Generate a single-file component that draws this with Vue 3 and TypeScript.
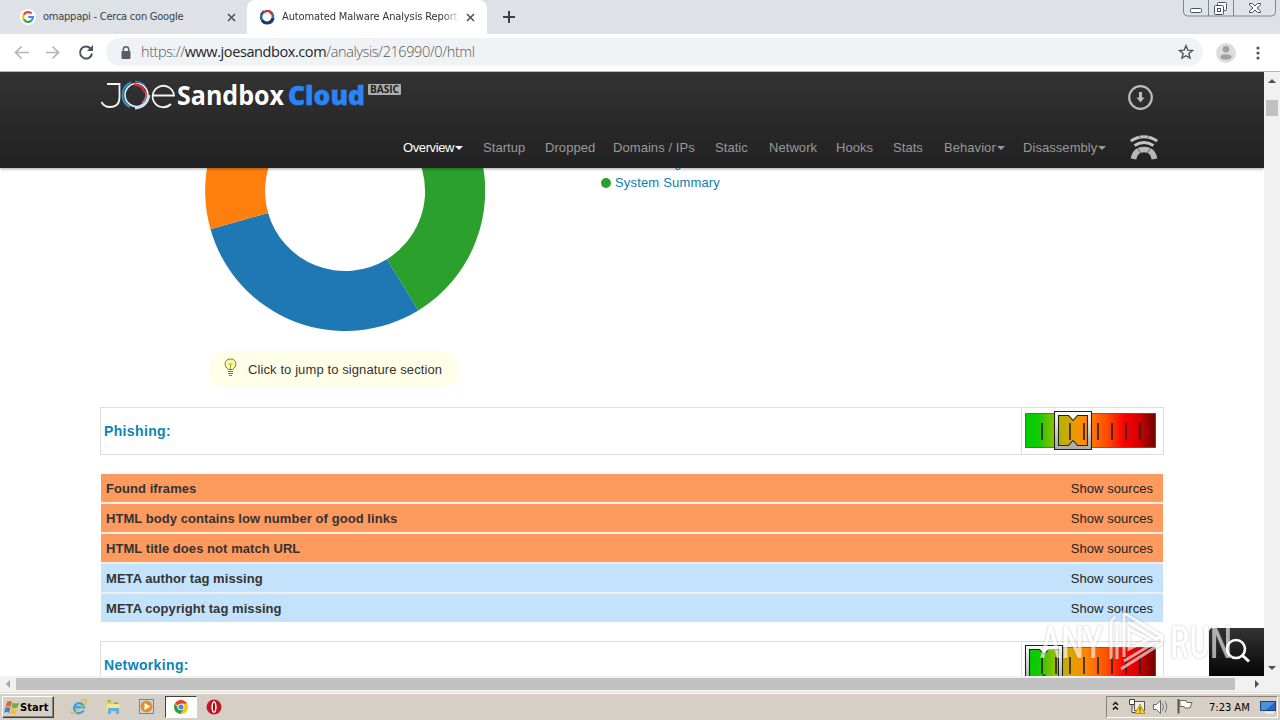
<script setup lang="ts">
interface NavItem { label: string; active?: boolean; menu?: boolean }
interface Finding { title: string; level: 'warn' | 'info' }

const navItems: NavItem[] = [
  { label: 'Overview', active: true, menu: true },
  { label: 'Startup' },
  { label: 'Dropped' },
  { label: 'Domains / IPs' },
  { label: 'Static' },
  { label: 'Network' },
  { label: 'Hooks' },
  { label: 'Stats' },
  { label: 'Behavior', menu: true },
  { label: 'Disassembly', menu: true },
]

const findings: Finding[] = [
  { title: 'Found iframes', level: 'warn' },
  { title: 'HTML body contains low number of good links', level: 'warn' },
  { title: 'HTML title does not match URL', level: 'warn' },
  { title: 'META author tag missing', level: 'info' },
  { title: 'META copyright tag missing', level: 'info' },
]

const ticks = [17, 31, 45, 59, 73, 87, 101, 115]
</script>

<template>
  <div class="screen">
    <div class="tabstrip">
      <div class="tab">
        <svg class="favicon" width="16" height="16" viewBox="0 0 16 16">
          <circle cx="8" cy="8" r="8" fill="#fff" />
          <g fill="none" stroke-width="2.2">
            <path d="M11.6 4.6A4.9 4.9 0 0 0 3.7 5.7" stroke="#ea4335" />
            <path d="M3.7 5.7a4.9 4.9 0 0 0 0 4.6" stroke="#fbbc05" />
            <path d="M3.7 10.3a4.9 4.9 0 0 0 7.6 1.3" stroke="#34a853" />
            <path d="M11.3 11.6A4.8 4.8 0 0 0 12.9 8H8.2" stroke="#4285f4" />
          </g>
        </svg>
        <span class="tab-title first">omappapi - Cerca con Google</span>
        <svg class="close" width="9" height="9" viewBox="0 0 9 9"><path d="M1 1l7 7M8 1l-7 7" stroke="#4e5256" stroke-width="1.6" /></svg>
      </div>
      <div class="tab current">
        <svg class="favicon" width="16" height="16" viewBox="0 0 16 16">
          <g fill="none" stroke-width="2.6">
            <path d="M5 3A6 6 0 0 0 3.500 12" stroke="#2a6c9c" />
            <path d="M3.2 11.5A6 6 0 0 0 14 8.5" stroke="#173a5c" stroke-width="3" />
            <path d="M14 8.5A6 6 0 0 0 11.5 3" stroke="#3f6f98" />
            <path d="M5 3.500l1.500-1.300h4L12.800 5" stroke="#cf2f35" stroke-width="2.200" />
            <path d="M1.500 5.500L4.500 1.500M14.500 11l-3 3.500" stroke="#234c73" stroke-width="1.200" />
          </g>
        </svg>
        <span class="tab-title second">Automated Malware Analysis Report</span>
        <svg class="close" width="9" height="9" viewBox="0 0 9 9"><path d="M1 1l7 7M8 1l-7 7" stroke="#4e5256" stroke-width="1.6" /></svg>
      </div>
      <svg class="plus" width="12" height="12" viewBox="0 0 12 12"><path d="M6 0v12M0 6h12" stroke="#3c4043" stroke-width="2" /></svg>
      <svg class="winbtns" width="94" height="18" viewBox="0 0 94 18">
        <path d="M.5 0v12q0 4 4 4h84q4 0 4-4V0" fill="#e0e3e9" stroke="#80858f" />
        <path d="M25.500 0v16M50.500 0v16" stroke="#80858f" />
        <g fill="#fff" stroke="#4b5262">
          <rect x="7.500" y="8.500" width="11" height="4" rx="1" />
          <rect x="34.500" y="2.500" width="9" height="8" rx="1" />
          <rect x="31.500" y="5.500" width="9" height="9" rx="1" />
          <rect x="34.500" y="8.500" width="3" height="3" />
          <path d="M66.500 3.500h3l2.500 2.500 2.500-2.500h3v1.500l-3.500 3 3.500 3v1.500h-3L72 10l-2.500 2.500h-3V11l3.500-3-3.500-3z" />
        </g>
      </svg>
    </div>

    <div class="toolbar">
      <svg class="navicons" width="80" height="16" viewBox="0 0 80 16" fill="none">
        <path d="M15 7.500H2M7.500 1.500l-6 6 6 6" stroke="#b4b5b7" stroke-width="1.700" />
        <path d="M32 7.500h12M38.500 1.500l6 6-6 6" stroke="#b4b5b7" stroke-width="1.700" />
        <path d="M76.500 3.500A6 6 0 1 0 78 8.500" stroke="#505356" stroke-width="2" />
        <path d="M79 0v6h-6z" fill="#505356" />
      </svg>
      <div class="omnibox">
        <svg width="10" height="13" viewBox="0 0 10 13"><path d="M2.300 6V3.500a2.700 2.700 0 0 1 5.400 0V6" fill="none" stroke="#5a5d61" stroke-width="1.500" /><rect x=".5" y="5" width="9" height="8" rx="1" fill="#5a5d61" /></svg>
        <span class="url">https://<b>www.joesandbox.com</b>/analysis/216990/0/html</span>
        <svg class="star" width="16" height="16" viewBox="0 0 16 16"><path d="M8 1.800l1.800 4.300 4.700.4-3.600 3 1.100 4.600L8 11.700l-4 2.400 1.100-4.600-3.600-3 4.700-.4z" fill="none" stroke="#505356" stroke-width="1.400" /></svg>
      </div>
      <svg class="avatar" width="20" height="20" viewBox="0 0 20 20"><circle cx="10" cy="10" r="10" fill="#dcdcdc" /><circle cx="10" cy="6.300" r="3.300" fill="#a0a0a0" /><ellipse cx="10" cy="14" rx="5.700" ry="2.800" fill="#a0a0a0" /></svg>
      <svg class="dots" width="4" height="14" viewBox="0 0 4 14" fill="#505356"><circle cx="2" cy="2" r="1.600" /><circle cx="2" cy="7" r="1.600" /><circle cx="2" cy="12" r="1.600" /></svg>
    </div>

    <div class="view">
      <div class="page">
        <header class="site-header">
          <div class="brand-row">
            <svg class="logo" width="304" height="32" viewBox="100 78 304 32">
              <path d="M107 84h12.500v13q0 10-9.500 10-6 0-8.500-5" fill="none" stroke="#f4f4f4" stroke-width="1.800" />
              <g fill="none">
                <circle cx="136.500" cy="95" r="11.500" stroke="#e6eef5" stroke-width="1.600" />
                <path d="M131 82.500a13.500 13.500 0 0 0-1 24.500" stroke="#2f8dc6" stroke-width="2.200" />
                <path d="M135 81.500a13.500 13.500 0 0 1 10 4" stroke="#3a93c6" stroke-width="1.200" />
                <path d="M134 84.500q8 0 11 8" stroke="#d42a34" stroke-width="2.400" />
                <path d="M135 108q12-1 14-13" stroke="#c4e6fb" stroke-width="2.800" />
                <path d="M146 91q1 8-4 12" stroke="#e26d74" stroke-width="1.500" />
                <path d="M152.500 95.500h21.500a10.700 10.700 0 1 0-3 8.500" stroke="#f4f4f4" stroke-width="1.800" />
              </g>
              <text class="word" x="177" y="104.500" textLength="107" lengthAdjust="spacingAndGlyphs" fill="#fff">Sandbox</text>
              <text class="word cloud" x="288" y="104.500" textLength="77" lengthAdjust="spacingAndGlyphs" fill="#2b84f5" stroke="#2b84f5">Cloud</text>
              <rect x="368" y="84" width="33" height="11" rx="1" fill="#adadad" />
              <text class="basic" x="370" y="93" textLength="29" lengthAdjust="spacingAndGlyphs" fill="#202020">BASIC</text>
            </svg>
            <svg class="download" width="26" height="26" viewBox="0 0 26 26"><circle cx="12.500" cy="12.500" r="11.300" fill="none" stroke="#bcbcbc" stroke-width="2.200" /><path d="M11 7h3v5.500h2.500l-4 5-4-5H11z" fill="#bcbcbc" /></svg>
          </div>
          <nav class="nav">
            <a v-for="item in navItems" :key="item.label" :class="{ active: item.active }">{{ item.label }}<i v-if="item.menu" class="caret"></i></a>
            <svg class="signal" width="28" height="26" viewBox="0 0 28 26" fill="none">
              <path d="M.8 6Q14-2.500 27.200 6" stroke="#c4c4c4" stroke-width="2.800" />
              <path d="M4.500 10.500q9.500-6 19 0" stroke="#c4c4c4" stroke-width="2.800" />
              <path d="M3.500 24Q5 14.500 14 14.500T24.500 24" stroke="#b8b8b8" stroke-width="5.600" />
              <path d="M7 12.500l4 6M21 12.500l-4 6M9 0l1 3M19 0l-1 3" stroke="#2b2b2b" stroke-width=".6" />
            </svg>
          </nav>
        </header>

        <main class="report">
          <section class="summary">
            <svg class="donut" width="280" height="163" viewBox="205 168 280 163">
              <path d="M418.300 310.400A140 140 0 0 0 345 51V111A80 80 0 0 1 386.900 259.200z" fill="#2ca02c" />
              <path d="M418.300 310.400A140 140 0 0 1 210.500 229.300L268.100 212.900A80 80 0 0 0 386.900 259.200z" fill="#1f77b4" />
              <path d="M210.500 229.300A140 140 0 0 1 345 51V111A80 80 0 0 0 268.100 212.900z" fill="#ff7f0e" />
            </svg>
            <ul class="legend">
              <li><i class="dot"></i><span>Networking</span></li>
              <li><i class="dot"></i><span>System Summary</span></li>
            </ul>
          </section>

          <div class="hint">
            <svg width="13" height="19" viewBox="0 0 13 19"><path d="M4.300 11.500Q1 9 1 5.700 1.500 1 6.500 1T12 5.700Q12 9 8.700 11.500z" fill="#fbfa9b" stroke="#77775a" /><path d="M6.500 11V7L4.500 5M6.500 7l2-2" stroke="#a2a03c" fill="none" /><path d="M4 13.500h5M4 15.500h5M5 17.500h3" stroke="#777" /></svg>
            <span>Click to jump to signature section</span>
          </div>

          <section v-for="name in ['Phishing:', 'Networking:']" :key="name" class="block">
            <div class="head">
              <h3>{{ name }}</h3>
              <div class="meter">
                <svg width="140" height="48" viewBox="0 0 140 48">
                  <defs>
                    <linearGradient id="heat"><stop offset="0" stop-color="#0c0" /><stop offset=".1" stop-color="#14ca00" /><stop offset=".22" stop-color="#90c000" /><stop offset=".34" stop-color="#dba400" /><stop offset=".45" stop-color="#ff8a00" /><stop offset=".62" stop-color="#ff5000" /><stop offset=".76" stop-color="#fa0000" /><stop offset=".86" stop-color="#dc0000" /><stop offset="1" stop-color="#700000" /></linearGradient>
                    <linearGradient id="silver" x1="0" x2="0" y1="0" y2="1"><stop offset="0" stop-color="#fff" /><stop offset="1" stop-color="#a9a9a9" /></linearGradient>
                  </defs>
                  <rect x="3.500" y="5.500" width="130" height="34" fill="url(#heat)" stroke="#333" stroke-opacity=".65" />
                  <path v-for="x in ticks" :key="x" :d="`M${x + 3} 15v17`" stroke="#222" stroke-opacity=".8" stroke-width="2" />
                  <g :transform="name === 'Phishing:' ? 'translate(32 3)' : 'translate(3 3)'">
                    <path fill-rule="evenodd" d="M.5.5h37v38H.5zM4.500 4.500v30h10l4.500-5 4.500 5h10v-30h-10L19 9.500 14.500 4.500z" fill="url(#silver)" stroke="#222" stroke-width="1.100" />
                  </g>
                </svg>
              </div>
            </div>
            <ul v-if="name === 'Phishing:'" class="findings">
              <li v-for="f in findings" :key="f.title" :class="f.level"><strong>{{ f.title }}</strong><span>Show sources</span></li>
            </ul>
          </section>
        </main>

        <div class="search"><svg width="26" height="26" viewBox="0 0 26 26" fill="none" stroke="#fff"><circle cx="11" cy="11" r="9" stroke-width="2.600" /><path d="M17.500 17.500l6.500 6" stroke-width="3" /></svg></div>
        <svg class="watermark" width="200" height="64" viewBox="1036 608 200 64">
          <text x="1040" y="658" textLength="63" lengthAdjust="spacingAndGlyphs">ANY</text>
          <text x="1170" y="658" textLength="62" lengthAdjust="spacingAndGlyphs">RUN</text>
          <g class="mark">
            <path d="M1111 659V624q0-5 5-7M1117 625v34" />
            <path d="M1124 657V613l38 23-6 3-28-17M1129 629v20l20-10zM1121 669l41-26v-6M1124 661l30-18" />
          </g>
        </svg>
      </div>
      <div class="vscroll"><i class="tri up"></i><i class="thumb"></i><i class="tri down"></i></div>
    </div>

    <div class="hscroll"><i class="tri left"></i><i class="hthumb"></i><i class="tri right"></i></div>

    <footer class="taskbar">
      <div class="start">
        <svg width="16" height="15" viewBox="0 0 16 15"><path d="M3 2q3-2 5 0L6.500 7q-2.500-2-5 0z" fill="#e8622c" /><path d="M9 2.500q3 2 6 0l-1.500 5q-3 1.500-6 0z" fill="#72ae3c" /><path d="M1.300 8q2.500-2 5 0L5 13q-2.500-2-5 0z" fill="#3d84ce" /><path d="M7.300 8.500q3 2 6 0l-1.500 5q-3 1.500-6 0z" fill="#f6c12c" /></svg>
        <b>Start</b>
      </div>
      <div class="apps">
        <span class="app"><svg width="18" height="18" viewBox="0 0 18 18" fill="none"><path d="M13.500 12.500A5 5 0 1 1 14 9.300H5" stroke="#3fa3df" stroke-width="2.400" /><path d="M1.500 13.500Q-.5 17.500 6 14T16.500 3.500q1-3.500-6-.5" stroke="#e5b53b" stroke-width="1.300" /></svg></span>
        <span class="app"><svg width="18" height="18" viewBox="0 0 18 18"><path d="M2 3h5l1 2h8v9H2z" fill="#e8c95d" /><path d="M3 6h13l-1 7H2z" fill="#f7e596" /><path d="M4 16v-6h11v6h-3v-3H7v3z" fill="#5cb1df" /><path d="M4 3h3M10 5h4" stroke="#76b34f" stroke-width="1.500" /></svg></span>
        <span class="app"><svg width="18" height="18" viewBox="0 0 18 18"><rect x="1.500" y="1.500" width="14" height="14" fill="#b9dcf5" stroke="#4c91ca" /><circle cx="8.500" cy="8.500" r="6" fill="#f28b1c" /><path d="M6.500 5l5.500 3.500L6.500 12z" fill="#fff" /></svg></span>
        <span class="app pressed"><svg width="14" height="14" viewBox="0 0 14 14"><circle cx="7" cy="7" r="7" fill="#fbc116" /><path d="M7 7L1 3.500A7 7 0 0 1 13 3.500H7z" fill="#df4332" /><path d="M1 3.500A7 7 0 0 0 6.500 14L10 8.500H4z" fill="#319d4c" /><circle cx="7" cy="7" r="3.300" fill="#fff" /><circle cx="7" cy="7" r="2.500" fill="#4384e8" /></svg></span>
        <span class="app opera"><svg width="16" height="16" viewBox="0 0 16 16"><circle cx="8" cy="8" r="7.500" fill="#c01822" /><ellipse cx="8" cy="8" rx="2.600" ry="6" fill="#fff" /><ellipse cx="8" cy="8" rx="1.100" ry="4.600" fill="#9d0c15" /></svg></span>
      </div>
      <div class="tray">
        <svg width="84" height="18" viewBox="1111 698 84 18" fill="none">
          <path d="M1113 705l2.500-2.500 2.500 2.500M1113 709.500l2.500-2.500 2.500 2.500" stroke="#111" stroke-width="1.500" />
          <rect x="1134.500" y="701.500" width="10" height="9" fill="#eee" stroke="#555" /><path d="M1129.500 699.500h5v5h-5zM1132 705v7.500h3" fill="#fff" stroke="#444" /><path d="M1140 704l5 9.500h-10z" fill="#f7d416" stroke="#8c7500" stroke-width=".6" /><path d="M1140 707v3.500M1140 711.500v1" stroke="#222" />
          <path d="M1153.500 704.500h3l4-4v13l-4-4h-3z" fill="#fff" stroke="#666" /><path d="M1162.500 703.500q2 3 0 7M1165 701.500q3.500 5 0 11" stroke="#777" />
          <path d="M1178.500 699v14.500" stroke="#555" stroke-width="2" /><path d="M1180 700.500h6l1 2h5l-2 5.500h-5l-1-1.500h-4z" fill="#fff" stroke="#666" />
        </svg>
        <span class="clock">7:23 AM</span>
        <svg width="16" height="13" viewBox="0 0 16 13"><rect x=".5" y=".5" width="15" height="9" fill="#2766bd" stroke="#1b4284" /><path d="M1 1h14L6 9H1z" fill="#4d91dd" /><path d="M5 11.500h9" stroke="#eee" stroke-width="2" /></svg>
      </div>
    </footer>
  </div>
</template>

<style>
html, body { margin: 0; overflow: hidden; }
</style>

<style scoped>
* { box-sizing: border-box; }
.screen { width: 1280px; height: 720px; display: flex; flex-direction: column; overflow: hidden; background: #fff; font-family: "Liberation Sans", Arial, sans-serif; }
svg { display: block; flex: none; }
ul { list-style: none; margin: 0; padding: 0; }

.tabstrip { height: 34px; flex: none; background: #dee1e6; display: flex; align-items: flex-start; }
.tab { width: 247px; height: 34px; display: flex; align-items: center; padding-left: 20px; }
.tab.current { width: 240px; background: #fff; border-radius: 8px 8px 0 0; padding-left: 12px; }
.tab-title { font: 11px/16px "DejaVu Sans Condensed", "DejaVu Sans", sans-serif; font-stretch: condensed; color: #3c4043; white-space: nowrap; margin-left: 7px; }
.first { width: 184px; letter-spacing: -.23px; }
.second { width: 177px; overflow: hidden; color: #303336; letter-spacing: -.12px; mask-image: linear-gradient(90deg, #000 90%, transparent 101%); }
.tab .close { margin-left: 0; }
.second + .close { margin-left: 7px; }
.plus { margin: 11px 0 0 16px; }
.winbtns { margin-left: auto; margin-right: 3px; }

.toolbar { height: 38px; flex: none; background: #fff; border-bottom: 1px solid #b8b9bb; display: flex; align-items: center; }
.navicons { margin-left: 14px; }
.omnibox { width: 1097px; height: 28px; margin-left: 12px; margin-top: -1px; border-radius: 14px; background: #f0f3f5; display: flex; align-items: center; padding: 0 9px 0 15px; }
.url { font: 300 14.5px/20px "Open Sans", sans-serif; letter-spacing: -.41px; color: #54585d; margin-left: 10px; white-space: nowrap; }
.url b { font-weight: 400; color: #24262a; }
.star { margin-left: auto; }
.avatar { margin-left: 13px; }
.dots { margin-left: 20px; }

.view { height: 604px; flex: none; display: flex; }
.page { position: relative; width: 1264px; height: 604px; overflow: hidden; background: #fff; }
.site-header { position: relative; z-index: 1; height: 96px; padding: 6px 0 0 100px; background: linear-gradient(#333, #212121); box-shadow: 0 1px 3px rgba(0, 0, 0, .35); }
.brand-row { height: 56px; display: flex; }
.logo { overflow: visible; }
.download { margin: 7px 0 0 724px; }
.word { font: 700 26.5px "Open Sans", sans-serif; }
.cloud { font-weight: 800; stroke-width: .5px; }
.basic { font: 700 10px "Open Sans", sans-serif; }
.nav { margin-left: 303px; display: grid; grid-template-columns: 80px 62px 68px 102px 54px 67px 57px 51px 79px 107px 28px; align-items: start; font-size: 13px; line-height: 28px; letter-spacing: .06px; color: #999; white-space: nowrap; }
.nav .active { color: #fff; letter-spacing: -.4px; }
.signal { margin-top: 1px; }
.caret { display: inline-block; border: 4px solid transparent; border-top-color: currentColor; border-bottom: 0; margin-left: 1px; vertical-align: 2px; }

.report { padding-left: 100px; }
.summary { height: 163px; padding-left: 105px; display: flex; }
.legend { margin: -15px 0 0 116px; font-size: 13px; line-height: 20px; letter-spacing: .17px; color: #0880b5; }
.legend li { display: flex; align-items: center; gap: 4px; height: 20px; }
.dot { width: 10px; height: 10px; border-radius: 50%; background: #2ca02c; }
.hint { width: 250px; height: 37px; margin: 20px 0 0 109px; border-radius: 18px; background: #ffffe9; display: flex; align-items: center; padding-left: 15px; font-size: 13px; letter-spacing: .1px; color: #333; white-space: nowrap; }
.hint svg { margin-top: -4px; }
.hint span { margin-left: 11px; }
.block { margin-top: 19px; width: 1064px; }
.head { display: flex; height: 48px; border: 1px solid #ddd; }
h3 { margin: 0; flex: 1; font-size: 14px; line-height: 47px; padding-left: 3px; color: #0a85b7; letter-spacing: .36px; }
.meter { width: 142px; border-left: 1px solid #ddd; }
.findings { margin: 19px 1px 0; display: grid; gap: 2px; background: #f2eeec; }
.findings li { height: 28px; display: flex; justify-content: space-between; align-items: center; padding: 1px 10px 0 5px; font-size: 13px; }
.findings strong { color: #333; letter-spacing: .06px; }
.findings span { letter-spacing: .04px; color: #222; }
.warn { background: #ff9a5e; }
.info { background: #c3e3fd; }

.search { position: absolute; right: 0; bottom: 0; width: 55px; height: 48px; border-radius: 4px 0 0 0; background: linear-gradient(#333, #050505); display: flex; align-items: center; padding: 0 0 3px 16px; }
.watermark { position: absolute; left: 1036px; top: 536px; overflow: visible; filter: drop-shadow(0 0 1px rgba(70, 70, 70, .55)); opacity: .62; }
.watermark text { font: 500 45px "Roboto", sans-serif; fill: #fff; }
.mark { fill: none; stroke: #fff; stroke-width: 3px; }

.vscroll { width: 16px; background: #f1f1f1; display: flex; flex-direction: column; align-items: center; padding: 7px 0 6px; }
.tri { display: block; border: 4px solid transparent; }
.up { border-top: 0; border-bottom-color: #505050; }
.thumb { width: 12px; height: 16px; margin-top: 17px; background: #c1c1c1; }
.down { border-bottom: 0; border-top-color: #505050; margin-top: auto; }
.hscroll { height: 16px; flex: none; background: #f1f1f1; display: flex; align-items: center; padding: 0 21px 0 6px; }
.left { border-left: 0; border-right-color: #a3a3a3; }
.hthumb { width: 1219px; height: 12px; margin-left: 6px; background: #c1c1c1; }
.right { border-right: 0; border-left-color: #505050; margin-left: auto; }

.taskbar { height: 28px; flex: none; background: #d6cfc6; border-top: 1px solid #e4dfd8; box-shadow: inset 0 1px #fff; display: flex; align-items: center; font-family: "DejaVu Sans Condensed", "DejaVu Sans", sans-serif; font-stretch: condensed; font-size: 11px; color: #000; padding-top: 1px; }
.start { width: 52px; height: 22px; margin-left: 2px; border: 1px solid; border-color: #fff #404040 #404040 #fff; box-shadow: inset -1px -1px #87827a; display: flex; align-items: center; padding-left: 1px; }
.start b { letter-spacing: .1px; }
.apps { display: flex; margin-left: 8px; }
.app { width: 34px; height: 22px; display: flex; align-items: center; justify-content: center; }
.pressed { width: 32px; margin: 0 1px; background: #fdfdfb; border: 1px solid; border-color: #404040 #fff #fff #404040; }
.opera { margin-left: -1px; }
.tray { width: 172px; height: 22px; margin: 0 2px 0 auto; border: 1px solid; border-color: #88837b #fff #fff #88837b; display: flex; align-items: center; padding-left: 4px; }
.clock { width: 41px; margin-left: 14px; letter-spacing: 0; white-space: nowrap; }
.clock + svg { margin-left: 10px; }
</style>
